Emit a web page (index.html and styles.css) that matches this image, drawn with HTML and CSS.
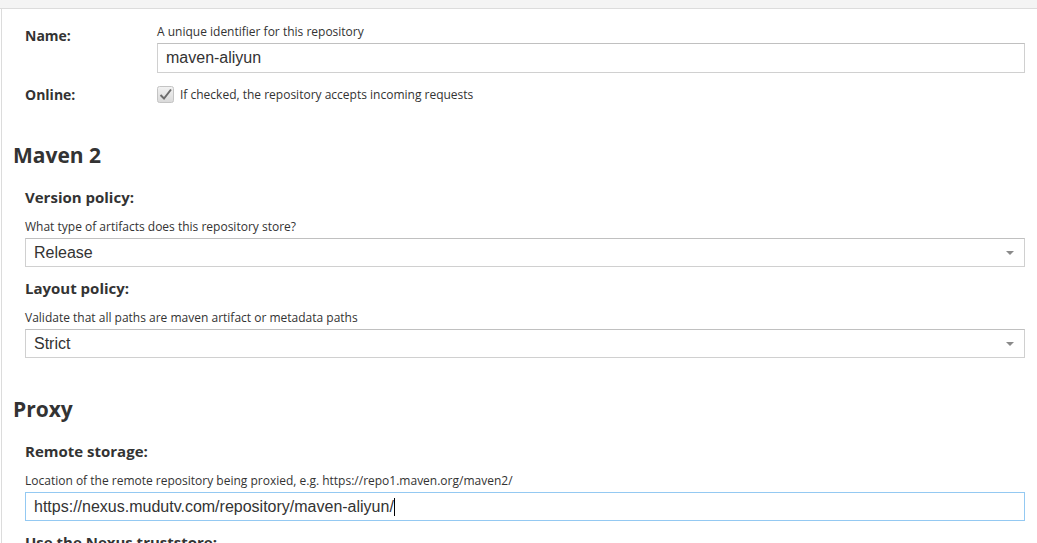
FILE: index.html
```html
<!DOCTYPE html>
<html>
<head>
<meta charset="utf-8">
<link rel="stylesheet" href="styles.css">
</head>
<body>
<div class="topbar"></div>
<div class="panel">
  <div class="row row-name">
    <div class="label">Name:</div>
    <div class="field">
      <div class="help">A unique identifier for this repository</div>
      <div class="input">maven-aliyun</div>
    </div>
  </div>
  <div class="row row-online">
    <div class="label">Online:</div>
    <div class="field check-field">
      <svg class="checkbox" width="17" height="17" viewBox="0 0 17 17">
        <defs>
          <linearGradient id="cb" x1="0" y1="0" x2="0" y2="1">
            <stop offset="0" stop-color="#f2f2f2"/>
            <stop offset="1" stop-color="#d9d9d9"/>
          </linearGradient>
        </defs>
        <rect x="0.5" y="0.5" width="16" height="16" rx="2" fill="url(#cb)" stroke="#c4c4c4"/>
        <path d="M3.5 9 L7 12.5 L14 3.5" fill="none" stroke="#6d6d6d" stroke-width="2"/>
      </svg>
      <span class="help inline">If checked, the repository accepts incoming requests</span>
    </div>
  </div>

  <h2 class="section">Maven 2</h2>
  <div class="block">
    <div class="blabel">Version policy:</div>
    <div class="help">What type of artifacts does this repository store?</div>
    <div class="input select">Release<span class="arrow"></span></div>
    <div class="blabel">Layout policy:</div>
    <div class="help">Validate that all paths are maven artifact or metadata paths</div>
    <div class="input select">Strict<span class="arrow"></span></div>
  </div>

  <h2 class="section">Proxy</h2>
  <div class="block">
    <div class="blabel">Remote storage:</div>
    <div class="help">Location of the remote repository being proxied, e.g. https://repo1.maven.org/maven2/</div>
    <div class="input select focus">https://nexus.mudutv.com/repository/maven-aliyun/<span class="caret"></span></div>
    <div class="blabel">Use the Nexus truststore:</div>
  </div>
</div>
</body>
</html>
```
FILE: styles.css
```css
html, body {
  margin: 0;
  padding: 0;
  background: #fff;
  overflow: hidden;
}
body {
  font-family: "Open Sans", "Liberation Sans", sans-serif;
  color: #333;
  width: 1037px;
  height: 543px;
}
.topbar {
  height: 8px;
  background: #f4f4f4;
  border-bottom: 1px solid #dcdcdc;
}
.panel {
  margin-left: 1px;
  border-left: 1px solid #dcdcdc;
  padding: 0 12px 0 11px;
  height: 600px;
}
.row {
  display: flex;
  padding-left: 12px;
}
.label {
  width: 132px;
  font-weight: 700;
  font-size: 14px;
  line-height: 17px;
  color: #333;
}
.row-name {
  padding-top: 15px;
}
.row-name .label {
  padding-top: 3px;
}
.field {
  flex: 1;
}
.help {
  font-size: 12px;
  line-height: 16px;
  color: #333;
}
.input {
  box-sizing: border-box;
  height: 30px;
  border: 1px solid #d0d0d0;
  border-top-color: #c0c0c0;
  font-family: "Liberation Sans", Arial, sans-serif;
  font-size: 16px;
  line-height: 28px;
  padding-left: 8px;
  color: #333;
  position: relative;
}
.row-name .input {
  margin-top: 3px;
}
.row-online {
  margin-top: 13px;
  height: 17px;
  align-items: center;
}
.check-field {
  display: flex;
  align-items: center;
  gap: 6px;
}
.checkbox {
  display: block;
}
.help.inline {
  line-height: 17px;
}
.section {
  font-size: 21px;
  line-height: 28px;
  font-weight: 700;
  margin: 0 0 7px 0;
  color: #333;
}
.row-online + .section {
  margin-top: 38px;
}
.block {
  display: flow-root;
  padding-left: 12px;
}
.blabel {
  font-size: 15px;
  line-height: 20px;
  font-weight: 700;
  color: #333;
  margin-top: 11px;
  margin-bottom: 12px;
}
.block .help {
  margin-bottom: 3px;
}
.select {
  height: 29px;
  line-height: 27px;
}
.arrow {
  position: absolute;
  right: 10px;
  top: 12px;
  width: 0;
  height: 0;
  border-left: 4px solid transparent;
  border-right: 4px solid transparent;
  border-top: 4px solid #8a8a8a;
}
.block + .section {
  margin-top: 37px;
}
.focus {
  border-color: #94c9f2;
}
.caret {
  display: inline-block;
  width: 1px;
  height: 18px;
  background: #000;
  vertical-align: -4px;
}
```
